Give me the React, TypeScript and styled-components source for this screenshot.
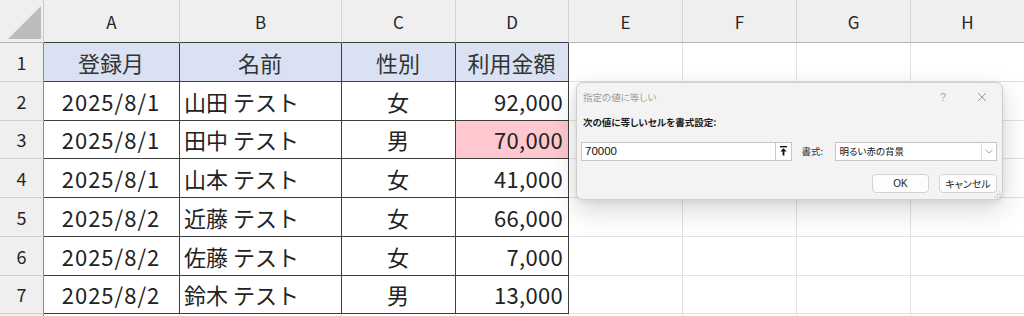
import React from "react";
import styled, { createGlobalStyle } from "styled-components";

const Global = createGlobalStyle`
  html, body { margin: 0; padding: 0; background: #fff; overflow: hidden; }
  body { width: 1024px; height: 316px; }
  * { box-sizing: border-box; }
`;

const FONT = `"Noto Sans CJK JP", "Noto Sans", sans-serif`;
const DARK = "#3d3d3d";
const GRID = "#e1e1e1";

const Stage = styled.div`
  position: relative;
  width: 1024px;
  height: 316px;
  overflow: hidden;
  font-family: ${FONT};
`;

const Sheet = styled.div`
  display: grid;
  grid-template-columns: 44px 136px 162px 114px 113px 114px 114px 114px 114px 114px;
  grid-template-rows: 43px repeat(8, 38.75px);
`;

const Corner = styled.div`
  background: #efefef;
  border-right: 1px solid #c9c9c9;
  border-bottom: 1px solid #b5b5b5;
  display: flex;
  align-items: flex-end;
  justify-content: flex-end;
  padding: 0 2px 3px 0;
`;

const ColHead = styled.div<{ $edge?: boolean }>`
  background: #efefef;
  border-right: 1px solid #d4d4d4;
  border-bottom: 1px solid ${(p) => (p.$edge ? DARK : "#b5b5b5")};
  display: flex;
  align-items: center;
  justify-content: center;
  font-size: 17px;
  color: #262626;
  padding-top: 1px;
`;

const RowHead = styled.div`
  background: #efefef;
  border-right: 1px solid #8a8a8a;
  border-bottom: 1px solid #d0d0d0;
  display: flex;
  align-items: center;
  justify-content: center;
  font-size: 18px;
  color: #262626;
`;

const Cell = styled.div<{
  $align?: "left" | "center" | "right";
  $fill?: string;
  $table?: boolean;
  $head?: boolean;
  $spacing?: number;
}>`
  background: ${(p) => p.$fill || "#fff"};
  border-right: 1px solid ${(p) => (p.$table ? DARK : GRID)};
  border-bottom: 1px solid ${(p) => (p.$table ? DARK : GRID)};
  display: flex;
  align-items: center;
  justify-content: ${(p) =>
    p.$align === "left" ? "flex-start" : p.$align === "right" ? "flex-end" : "center"};
  padding: 0 5px 0 4px;
  font-size: 22px;
  letter-spacing: ${(p) => p.$spacing || 0}px;
  color: ${(p) => (p.$head ? "#333" : "#222")};
  white-space: nowrap;
  overflow: hidden;
`;

const Dialog = styled.div`
  position: absolute;
  left: 576px;
  top: 82px;
  width: 427px;
  height: 118px;
  background: #f3f3f3;
  border: 1px solid #cfcfcf;
  border-radius: 7px;
  box-shadow: 0 10px 28px rgba(0, 0, 0, 0.16), 0 2px 6px rgba(0, 0, 0, 0.08);
  font-family: "Liberation Sans", "Noto Sans CJK JP", sans-serif;
  font-feature-settings: "palt";
  display: flex;
  flex-direction: column;
  padding: 0 5px 0 4px;
  color: #1a1a1a;
`;

const TitleBar = styled.div`
  height: 28px;
  display: flex;
  align-items: center;
  padding-left: 2px;
  font-size: 9.5px;
  color: #9b9b9b;
`;

const TitleText = styled.span`
  flex: 1;
  font-family: ${FONT};
`;

const TitleIcon = styled.span<{ $w: number }>`
  width: ${(p) => p.$w}px;
  display: flex;
  justify-content: center;
  color: #a0a0a0;
  font-size: 10px;
`;

const Label = styled.div`
  font-family: ${FONT};
  font-weight: 700;
  font-size: 9.5px;
  padding-left: 2px;
  height: 22px;
  display: flex;
  align-items: center;
`;

const FieldRow = styled.div`
  display: flex;
  align-items: center;
  margin-top: 9px;
  height: 18.5px;
`;

const InputBox = styled.div`
  width: 212px;
  height: 18.5px;
  background: #fff;
  border: 1px solid #c6c6c6;
  display: flex;
  align-items: center;
`;

const InputText = styled.span`
  flex: 1;
  padding-left: 3px;
  font-size: 11.5px;
  color: #111;
`;

const UpButton = styled.span`
  width: 16px;
  height: 100%;
  border-left: 1px solid #c6c6c6;
  display: flex;
  align-items: center;
  justify-content: center;
`;

const FormatLabel = styled.span`
  font-family: ${FONT};
  font-size: 9.5px;
  margin-left: 9px;
  width: 34px;
  color: #333;
`;

const SelectBox = styled.div`
  width: 162px;
  height: 18.5px;
  background: #fff;
  border: 1px solid #c6c6c6;
  display: flex;
  align-items: center;
`;

const SelectText = styled.span`
  flex: 1;
  padding-left: 3px;
  font-family: ${FONT};
  font-size: 9.5px;
  color: #111;
`;

const Chevron = styled.span`
  width: 15px;
  height: 100%;
  border-left: 1px solid #dcdcdc;
  display: flex;
  align-items: center;
  justify-content: center;
`;

const ButtonRow = styled.div`
  display: flex;
  justify-content: flex-end;
  gap: 10px;
  margin-top: 13px;
`;

const Btn = styled.div<{ $w: number }>`
  width: ${(p) => p.$w}px;
  height: 19.5px;
  background: #fdfdfd;
  border: 1px solid #d2d2d2;
  border-radius: 4px;
  display: flex;
  align-items: center;
  justify-content: center;
  font-size: 10px;
  color: #1a1a1a;
  font-family: "Liberation Sans", "Noto Sans CJK JP", sans-serif;
`;

const Grip = styled.svg`
  position: absolute;
  right: 1px;
  bottom: 1px;
`;

const header = ["登録月", "名前", "性別", "利用金額"];
const rows: [string, string, string, string][] = [
  ["2025/8/1", "山田 テスト", "女", "92,000"],
  ["2025/8/1", "田中 テスト", "男", "70,000"],
  ["2025/8/1", "山本 テスト", "女", "41,000"],
  ["2025/8/2", "近藤 テスト", "女", "66,000"],
  ["2025/8/2", "佐藤 テスト", "女", "7,000"],
  ["2025/8/2", "鈴木 テスト", "男", "13,000"],
];
const letters = ["A", "B", "C", "D", "E", "F", "G", "H", ""];
const aligns: ("center" | "left" | "right")[] = ["center", "left", "center", "right"];
const spacings = [1, 0, 0, 0.3];

export default function App() {
  const emptyTail = (key: string, n: number) =>
    Array.from({ length: n }, (_, i) => <Cell key={`${key}-${i}`} />);

  return (
    <>
      <Global />
      <Stage>
        <Sheet>
          <Corner>
            <svg width="33" height="33" viewBox="0 0 33 33">
              <polygon points="33,0 33,33 0,33" fill="#bcbcbc" />
            </svg>
          </Corner>
          {letters.map((l, i) => (
            <ColHead key={i} $edge={i < 4}>
              {l}
            </ColHead>
          ))}

          <RowHead>1</RowHead>
          {header.map((h) => (
            <Cell key={h} $table $head $fill="#d9e1f2">
              {h}
            </Cell>
          ))}
          {emptyTail("h", 5)}

          {rows.map((r, ri) => (
            <React.Fragment key={ri}>
              <RowHead>{ri + 2}</RowHead>
              {r.map((v, ci) => (
                <Cell
                  key={ci}
                  $table
                  $align={aligns[ci]}
                  $spacing={spacings[ci]}
                  $fill={ri === 1 && ci === 3 ? "#ffc7ce" : undefined}
                >
                  {v}
                </Cell>
              ))}
              {emptyTail(`r${ri}`, 5)}
            </React.Fragment>
          ))}

          <RowHead />
          {emptyTail("r8", 9)}
        </Sheet>

        <Dialog>
          <TitleBar>
            <TitleText>指定の値に等しい</TitleText>
            <TitleIcon $w={48}>?</TitleIcon>
            <TitleIcon $w={30}>
              <svg width="10" height="10" viewBox="0 0 10 10">
                <path d="M1 1 L9 9 M9 1 L1 9" stroke="#9a9a9a" strokeWidth="1" />
              </svg>
            </TitleIcon>
          </TitleBar>
          <Label>次の値に等しいセルを書式設定:</Label>
          <FieldRow>
            <InputBox>
              <InputText>70000</InputText>
              <UpButton>
                <svg width="7" height="10" viewBox="0 0 7 10">
                  <rect x="0" y="0" width="7" height="1.4" fill="#111" />
                  <path d="M3.5 2.2 L6.6 5.6 L4.4 5.6 L4.4 9.6 L2.6 9.6 L2.6 5.6 L0.4 5.6 Z" fill="#111" />
                </svg>
              </UpButton>
            </InputBox>
            <FormatLabel>書式:</FormatLabel>
            <SelectBox>
              <SelectText>明るい赤の背景</SelectText>
              <Chevron>
                <svg width="8" height="5" viewBox="0 0 8 5">
                  <path d="M0.5 0.8 L4 4 L7.5 0.8" stroke="#9a9a9a" strokeWidth="0.9" fill="none" />
                </svg>
              </Chevron>
            </SelectBox>
          </FieldRow>
          <ButtonRow>
            <Btn $w={57}>OK</Btn>
            <Btn $w={58}>キャンセル</Btn>
          </ButtonRow>
          <Grip width="7" height="7" viewBox="0 0 7 7">
            <circle cx="6" cy="1" r="0.6" fill="#8a8a8a" />
            <circle cx="6" cy="3.5" r="0.6" fill="#8a8a8a" />
            <circle cx="3.5" cy="3.5" r="0.6" fill="#8a8a8a" />
            <circle cx="6" cy="6" r="0.6" fill="#8a8a8a" />
            <circle cx="3.5" cy="6" r="0.6" fill="#8a8a8a" />
            <circle cx="1" cy="6" r="0.6" fill="#8a8a8a" />
          </Grip>
        </Dialog>
      </Stage>
    </>
  );
}
